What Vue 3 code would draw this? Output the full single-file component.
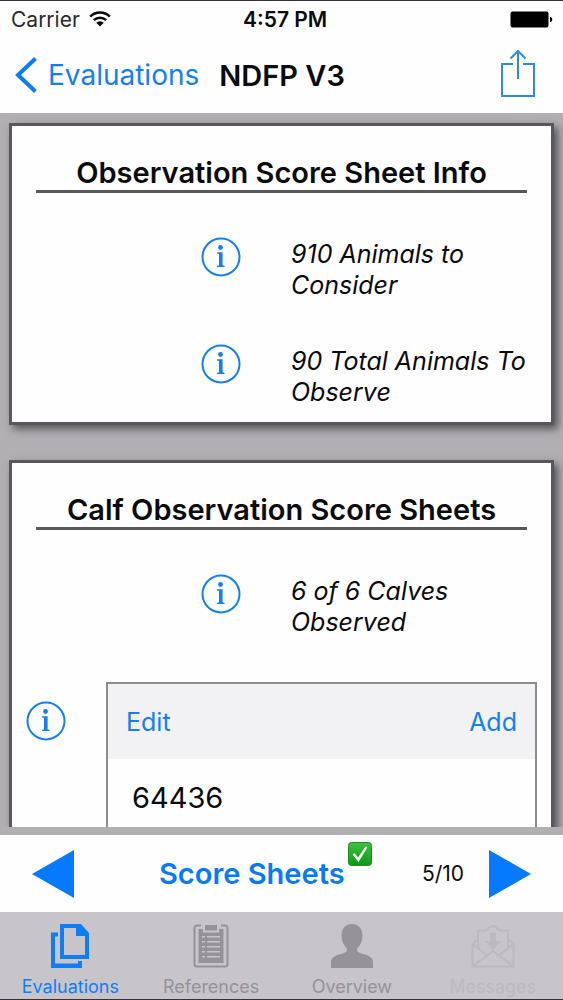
<template>
  <div class="screen">
    <header class="top">
      <div class="status">
        <span class="carrier">
          Carrier
          <svg class="wifi" viewBox="0 0 22 16" aria-hidden="true">
            <path d="M1.2 5.6a14 14 0 0 1 19.6 0" />
            <path d="M4.8 9.2a9 9 0 0 1 12.4 0" />
            <path class="solid" d="M11 15.6 7.2 11.8a5.4 5.4 0 0 1 7.6 0z" />
          </svg>
        </span>
        <span class="clock">4:57 PM</span>
        <svg class="battery" viewBox="0 0 43 17" aria-hidden="true">
          <rect x="0.5" y="0.5" width="38" height="16" rx="2" />
          <path d="M40 6c3 0 3 5 0 5z" />
        </svg>
      </div>
      <nav class="navbar">
        <button class="back" type="button">
          <svg class="chevron" viewBox="0 0 22 36" aria-hidden="true">
            <path d="M20.500 1.500 3 18l17.500 16.500" />
          </svg>
          Evaluations
        </button>
        <h1>NDFP V3</h1>
        <button class="share" type="button" aria-label="Share">
          <svg viewBox="0 0 36 50" aria-hidden="true">
            <path d="M13 14H2v32h32V14H23M18 29V1M10.500 8.500 18 1l7.500 7.500" />
          </svg>
        </button>
      </nav>
    </header>

    <main class="content">
      <section v-for="card in cards" :key="card.title" class="card">
        <h2>{{ card.title }}</h2>
        <div class="facts">
          <div v-for="fact in card.facts" :key="fact" class="fact">
            <button class="info" type="button" aria-label="Info">
              <svg viewBox="0 0 40 40" aria-hidden="true">
                <circle class="ring" cx="20" cy="20" r="18.500" />
                <circle cx="19.500" cy="10.500" r="2.400" />
                <path d="M16 15.200h5.600v13l2 .7v1.200H16v-1.200l2-.7V17l-2-.5z" />
              </svg>
            </button>
            <p>{{ fact }}</p>
          </div>
        </div>
        <div v-if="card.entries" class="entries">
          <button class="info" type="button" aria-label="Info">
            <svg viewBox="0 0 40 40" aria-hidden="true">
              <circle class="ring" cx="20" cy="20" r="18.500" />
              <circle cx="19.500" cy="10.500" r="2.400" />
              <path d="M16 15.200h5.600v13l2 .7v1.200H16v-1.200l2-.7V17l-2-.5z" />
            </svg>
          </button>
          <div class="list">
            <div class="list-head">
              <button type="button">Edit</button>
              <button type="button">Add</button>
            </div>
            <ul>
              <li v-for="entry in card.entries" :key="entry">{{ entry }}</li>
            </ul>
          </div>
        </div>
      </section>
    </main>

    <div class="pager">
      <button class="arrow" type="button" aria-label="Previous">
        <svg viewBox="0 0 42 48" aria-hidden="true"><path d="M42 0v48L0 24z" /></svg>
      </button>
      <button class="section-name" type="button">
        Score Sheets
        <svg class="check" viewBox="0 0 24 24" aria-hidden="true">
          <defs>
            <linearGradient id="check-fill" x1="0" y1="0" x2="0" y2="1">
              <stop offset="0" stop-color="#3fc043" />
              <stop offset="1" stop-color="#089c10" />
            </linearGradient>
          </defs>
          <rect x="0.500" y="0.500" width="23" height="23" rx="3" fill="url(#check-fill)" stroke="#218a28" />
          <path d="M4.500 12.500 6.500 11l3.500 4.500L17.500 4.500l2 .8L10.500 20z" fill="#fff" />
        </svg>
      </button>
      <span class="count">5/10</span>
      <button class="arrow" type="button" aria-label="Next">
        <svg viewBox="0 0 42 48" aria-hidden="true"><path d="M0 0v48l42-24z" /></svg>
      </button>
    </div>

    <nav class="tabs">
      <a
        v-for="tab in tabs"
        :key="tab.name"
        href="#"
        :class="{ active: tab.name === current, disabled: tab.disabled }"
      >
        <svg viewBox="0 0 44 44" aria-hidden="true">
          <g v-if="tab.icon === 'pages'">
            <path fill-rule="evenodd" d="M12 0h21l8 9v26H12zM16 4v27h21V12h-9V4z" />
            <path d="M3 8.500h7v4H7v27h23V37h4v7H3z" />
          </g>
          <g v-else-if="tab.icon === 'clipboard'">
            <path class="line" d="M12 1.500H8q-2.500 0-2.500 2.500v36q0 2.500 2.500 2.500h28q2.500 0 2.500-2.500V4q0-2.500-2.500-2.500h-4" />
            <path d="M16 1h12v5.500H16z" />
            <path fill-rule="evenodd" d="M9.500 5H14v3.500h16V5h4.500v34h-25zM13 12v1.500h3V12zm5 0v1.500h13V12zm-5 5v1.500h3V17zm5 0v1.500h13V17zm-5 5v1.500h3V22zm5 0v1.500h13V22zm-5 5v1.500h3V27zm5 0v1.500h13V27zm-5 5v1.500h3V32zm5 0v1.500h13V32z" />
          </g>
          <g v-else-if="tab.icon === 'person'">
            <path d="M22 0c7 0 10.500 5 10.500 12 0 5-2 9-5 12-1 3 0 4.500 4 5.500 8 2 11.500 4 11.500 9V44H1v-5.500c0-5 3.500-7 11.500-9 4-1 5-2.500 4-5.500-3-3-5-7-5-12C11.500 5 15 0 22 0z" />
          </g>
          <g v-else class="line">
            <path d="M7 15 1.500 20v22.500h41V20L37 15M1.500 20 17 32M42.500 20 27 32M2 42l20-15 20 15" />
            <path d="M7 24V6.500h6.500q3 0 4.500-2.500 4-4 8 0 1.500 2.500 4.500 2.500H37V24" />
            <path class="solid" d="M19 9h6v8h5l-8 9-8-9h5z" />
          </g>
        </svg>
        <span>{{ tab.name }}</span>
      </a>
    </nav>
  </div>
</template>

<script setup>
import { ref } from 'vue'

const current = ref('Evaluations')

const cards = [
  {
    title: 'Observation Score Sheet Info',
    facts: ['910 Animals to Consider', '90 Total Animals To Observe']
  },
  {
    title: 'Calf Observation Score Sheets',
    facts: ['6 of 6 Calves Observed'],
    entries: ['64436']
  }
]

const tabs = [
  { name: 'Evaluations', icon: 'pages' },
  { name: 'References', icon: 'clipboard' },
  { name: 'Overview', icon: 'person' },
  { name: 'Messages', icon: 'mail', disabled: true }
]
</script>

<style>
body {
  margin: 0;
}
</style>

<style scoped>
.screen {
  box-sizing: border-box;
  display: flex;
  flex-direction: column;
  height: 100vh;
  border-top: 1px solid #343236;
  border-bottom: 1px solid #343236;
  background: #b1afb2;
  color: #0b0a0c;
  font-family: Inter, "Liberation Sans", sans-serif;
}

button {
  padding: 0;
  border: 0;
  background: none;
  color: #1480f0;
  font: inherit;
  cursor: pointer;
}

svg {
  display: block;
  flex: none;
}

.top {
  background: #fefefe;
}

.status {
  display: grid;
  grid-template-columns: 232px auto 1fr;
  align-items: center;
  height: 36px;
  padding: 0 10px 0 11px;
  font-size: 21px;
}

.carrier {
  display: flex;
  align-items: center;
  gap: 9px;
  color: #2a292b;
}

.wifi {
  width: 22px;
  height: 16px;
  fill: none;
  stroke: #0b0a0c;
  stroke-width: 2.5;
}

.wifi .solid {
  fill: #0b0a0c;
  stroke: none;
}

.clock {
  font-weight: 600;
}

.battery {
  justify-self: end;
  width: 43px;
  height: 17px;
}

.navbar {
  display: flex;
  align-items: center;
  height: 76px;
  padding: 0 27px 0 15px;
}

.back {
  display: flex;
  align-items: center;
  gap: 11px;
  font-size: 28px;
}

.chevron {
  width: 22px;
  height: 36px;
  fill: none;
  stroke: #0a7cf8;
  stroke-width: 4;
}

h1 {
  margin: 0 auto 0 20px;
  font-size: 29px;
  font-weight: 600;
}

.share svg {
  width: 36px;
  height: 50px;
  fill: none;
  stroke: #2c8de0;
  stroke-width: 2;
}

.content {
  flex: 1;
  min-height: 0;
  padding: 10px 9px 0;
  overflow: hidden;
}

.card {
  margin-bottom: 35px;
  padding: 30px 14px 14px;
  border: 3px solid #59575a;
  background: #fefefe;
  box-shadow: 4px 4px 8px #555356;
}

h2 {
  margin: 0 10px 44px;
  border-bottom: 3px solid #59575a;
  font-size: 29px;
  font-weight: 600;
  line-height: 34px;
  text-align: center;
}

.facts {
  display: grid;
  gap: 43px;
}

.fact {
  display: grid;
  grid-template-columns: 215px 1fr;
  gap: 50px;
}

.fact .info {
  justify-self: end;
}

.info {
  align-self: start;
}

.info svg {
  width: 40px;
  height: 40px;
  fill: #1480f0;
}

.ring {
  fill: none;
  stroke: #1480f0;
  stroke-width: 2;
}

.fact p {
  margin: 0;
  padding-top: 2px;
  font-size: 25px;
  font-style: italic;
  line-height: 31px;
}

.entries {
  display: flex;
  gap: 40px;
  margin-top: 44px;
}

.entries .info {
  margin-top: 19px;
}

.list {
  flex: 1;
  border: 2px solid #8e8c8f;
}

.list-head {
  display: flex;
  justify-content: space-between;
  align-items: center;
  height: 75px;
  padding: 0 18px;
  background: #f2f1f3;
  font-size: 25px;
}

ul {
  margin: 0;
  padding: 0;
  list-style: none;
}

li {
  padding: 0 24px;
  font-size: 29px;
  line-height: 78px;
}

.pager {
  display: flex;
  align-items: center;
  height: 77px;
  padding: 0 32px;
  border-top: 8px solid #b1afb2;
  background: #fefefe;
}

.arrow svg {
  width: 42px;
  height: 48px;
  fill: #067aff;
}

.section-name {
  display: flex;
  align-items: center;
  gap: 3px;
  margin: 0 auto 0 85px;
  color: #067aff;
  font-size: 29px;
  font-weight: 600;
}

.check {
  width: 24px;
  height: 24px;
  margin-bottom: 40px;
}

.count {
  margin-right: 25px;
  font-size: 21px;
}

.tabs {
  display: grid;
  grid-template-columns: repeat(4, 1fr);
  height: 87px;
  background: #c7c5c9;
}

.tabs a {
  display: flex;
  flex-direction: column;
  align-items: center;
  gap: 8px;
  padding-top: 12px;
  color: #959397;
  font-size: 18px;
  line-height: 22px;
  text-decoration: none;
}

.tabs svg {
  width: 44px;
  height: 44px;
  fill: currentColor;
}

.tabs .line {
  fill: none;
  stroke: currentColor;
  stroke-width: 2;
}

.tabs .solid {
  fill: currentColor;
  stroke: none;
}

.tabs .active {
  color: #117df2;
}

.tabs .disabled {
  color: #bcbabe;
}
</style>
